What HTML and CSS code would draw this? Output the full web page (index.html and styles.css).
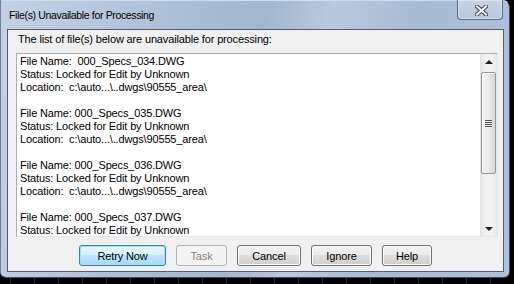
FILE: index.html
```html
<!DOCTYPE html>
<html lang="en">
  <head>
    <meta charset="UTF-8" />
    <meta name="viewport" content="width=device-width, initial-scale=1.0" />
    <title>File(s) Unavailable for Processing</title>
    <link rel="stylesheet" href="styles.css">
  </head>
  <body>
    <div class="window">
      <div class="titlebar">
        <span class="title">File(s) Unavailable for Processing</span>
        <button class="close" aria-label="Close">
          <svg width="13" height="11" viewBox="0 0 13 11">
            <path d="M2 1.5 L11 9.5 M11 1.5 L2 9.5" stroke="#3a4656" stroke-width="4" stroke-linecap="square" fill="none" />
            <path d="M2 1.5 L11 9.5 M11 1.5 L2 9.5" stroke="#ffffff" stroke-width="2" stroke-linecap="square" fill="none" />
          </svg>
        </button>
      </div>
      <div class="client">
        <p class="prompt">The list of file(s) below are unavailable for processing:</p>
        <div class="listbox">
          <div class="list-text">
            <div class="entry">
              <div>File Name:  000_Specs_034.DWG</div>
              <div>Status: Locked for Edit by Unknown</div>
              <div>Location:  c:\auto...\..dwgs\90555_area\</div>
            </div>
            <div class="entry">
              <div>File Name: 000_Specs_035.DWG</div>
              <div>Status: Locked for Edit by Unknown</div>
              <div>Location:  c:\auto...\..dwgs\90555_area\</div>
            </div>
            <div class="entry">
              <div>File Name: 000_Specs_036.DWG</div>
              <div>Status: Locked for Edit by Unknown</div>
              <div>Location:  c:\auto...\..dwgs\90555_area\</div>
            </div>
            <div class="entry">
              <div>File Name: 000_Specs_037.DWG</div>
              <div>Status: Locked for Edit by Unknown</div>
            </div>
          </div>
          <div class="scrollbar">
            <div class="arrow"><span class="tri up"></span></div>
            <div class="track">
              <div class="thumb"><span class="grip"></span></div>
            </div>
            <div class="arrow"><span class="tri down"></span></div>
          </div>
        </div>
        <div class="buttons">
          <button class="btn default retry">Retry Now</button>
          <button class="btn task" disabled>Task</button>
          <button class="btn cancel">Cancel</button>
          <button class="btn ignore">Ignore</button>
          <button class="btn help">Help</button>
        </div>
      </div>
    </div>
  </body>
</html>
```

FILE: styles.css
```css
body {
  margin: 0;
  width: 514px;
  height: 284px;
  overflow: hidden;
  background-color: #000000;
  background-image: repeating-linear-gradient(
    to right,
    transparent 0,
    transparent 10px,
    #262626 10px,
    #262626 11px,
    transparent 11px,
    transparent 24px
  );
  font-family: "Liberation Sans", Arial, sans-serif;
  font-size: 11px;
  letter-spacing: -0.15px;
  color: #000000;
}

.window {
  box-sizing: border-box;
  width: 510px;
  height: 278px;
  display: flex;
  flex-direction: column;
  padding: 0 5px 5px 6px;
  border: 1px solid #3e4b5e;
  border-top-color: #cfdbea;
  border-left-color: #6f7f96;
  border-radius: 0 7px 6px 6px;
  background: linear-gradient(
    100deg,
    #c3d1e4 0%,
    #adc0d9 30%,
    #a2b6d0 48%,
    #b9c9de 60%,
    #a8bbd5 75%,
    #b0c2da 100%
  );
}

.titlebar {
  height: 28px;
  flex: none;
  display: flex;
  justify-content: space-between;
  align-items: flex-start;
}

.title {
  font-size: 10.5px;
  letter-spacing: -0.35px;
  line-height: 14px;
  padding: 7px 0 0 2px;
  color: #000000;
}

.close {
  width: 46px;
  height: 20px;
  margin: -1px 1px 0 0;
  padding: 0;
  display: flex;
  align-items: center;
  justify-content: center;
  border: 1px solid #5d6d84;
  border-top: none;
  border-radius: 0 0 4px 4px;
  background: linear-gradient(#c8d5e6, #b6c7dd);
  box-shadow: inset 0 0 0 1px rgba(255, 255, 255, 0.35);
}

.close svg {
  margin: 1px 0 0 2px;
}

.client {
  flex: 1;
  display: flex;
  flex-direction: column;
  background-color: #f0f0f0;
  border: 1px solid #4f5e74;
}

.prompt {
  margin: 3px 0 0 10px;
  line-height: 13px;
}

.listbox {
  height: 184px;
  box-sizing: border-box;
  margin: 7px 5px 0 8px;
  display: flex;
  background-color: #ffffff;
  border: 1px solid #abadb3;
  border-bottom-color: #e3e9ef;
  border-right-color: #dbdfe6;
}

.list-text {
  flex: 1;
  overflow: hidden;
  padding: 1px 0 0 3px;
  line-height: 13px;
}

.entry {
  margin-bottom: 13px;
}

.entry div {
  white-space: pre;
}

.scrollbar {
  width: 17px;
  flex: none;
  display: flex;
  flex-direction: column;
  background: linear-gradient(to right, #e3e3e3, #f2f2f2 30%, #f2f2f2 70%, #e8e8e8);
}

.arrow {
  height: 17px;
  flex: none;
  display: flex;
  align-items: center;
  justify-content: center;
}

.tri {
  width: 0;
  height: 0;
  border-left: 4px solid transparent;
  border-right: 4px solid transparent;
}

.tri.up {
  border-bottom: 4px solid #1f1f1f;
  margin-top: -2px;
}

.tri.down {
  border-top: 4px solid #1f1f1f;
  margin-top: 2px;
}

.track {
  flex: 1;
  padding-top: 1px;
}

.thumb {
  height: 100px;
  margin: 0 1px 0 1px;
  display: flex;
  align-items: center;
  justify-content: center;
  border: 1px solid #969696;
  border-radius: 2px;
  background: linear-gradient(to right, #f3f3f3, #e9e9e9 50%, #d6d6d6);
  box-shadow: inset 1px 1px 0 #ffffff;
}

.grip {
  width: 7px;
  height: 7px;
  background: repeating-linear-gradient(
    to bottom,
    #5a5a5a 0,
    #5a5a5a 1px,
    #e2e2e2 1px,
    #e2e2e2 2px
  );
}

.buttons {
  display: flex;
  justify-content: center;
  gap: 10px;
  margin-top: 8px;
}

.btn {
  height: 21px;
  padding: 0;
  font-family: "Liberation Sans", Arial, sans-serif;
  font-size: 11px;
  letter-spacing: -0.15px;
  color: #000000;
  border: 1px solid #707070;
  border-radius: 3px;
  background: linear-gradient(#f2f2f2 0%, #ebebeb 50%, #dddddd 50%, #cfcfcf 100%);
  box-shadow: inset 0 0 0 1px #fcfcfc;
}

.btn.default {
  border-color: #3c7fb1;
  background: linear-gradient(#eaf6fd 0%, #d9f0fc 50%, #bee6fd 50%, #a7d9f5 100%);
  box-shadow: inset 0 0 0 1px #9fe1fc;
}

.btn:disabled {
  color: #838383;
  border-color: #adb2b5;
  background: #f4f4f4;
  box-shadow: none;
}

.retry {
  width: 87px;
}

.task {
  width: 51px;
}

.cancel {
  width: 64px;
}

.ignore {
  width: 61px;
}

.help {
  width: 50px;
}
```
